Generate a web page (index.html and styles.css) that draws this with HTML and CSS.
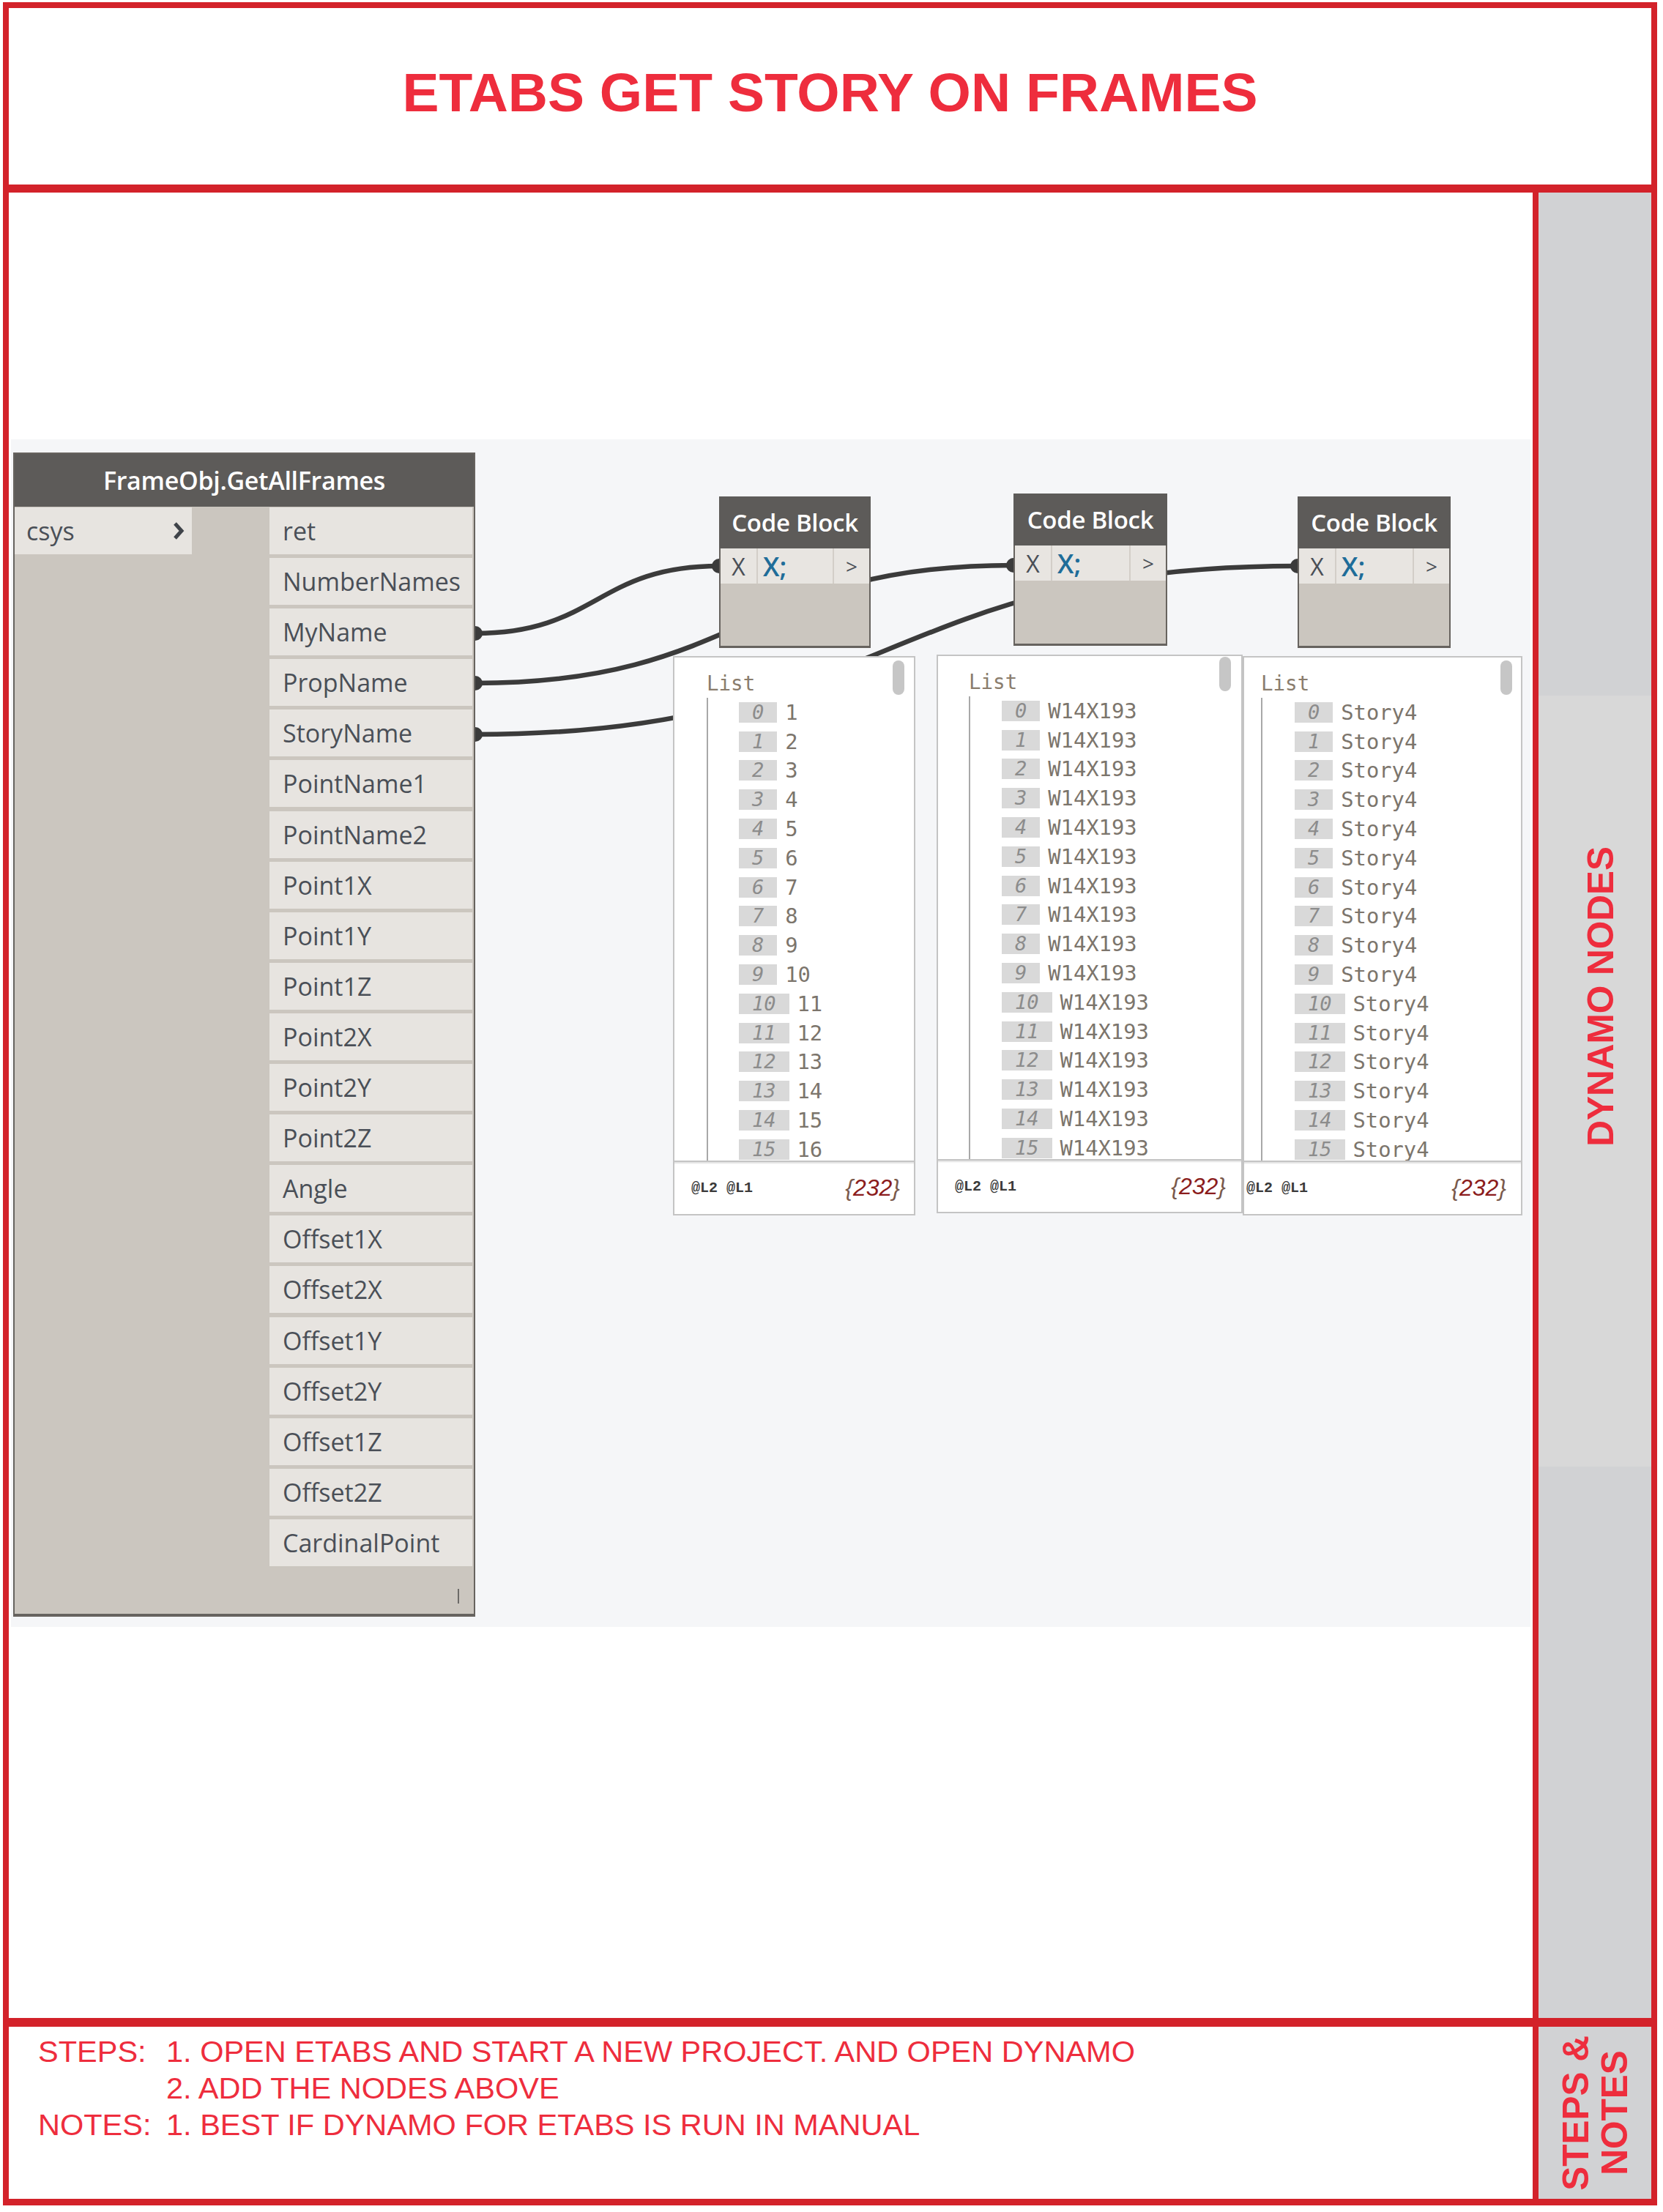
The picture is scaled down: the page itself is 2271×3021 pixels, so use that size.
FILE: index.html
```html
<!DOCTYPE html>
<html lang="en">
<head>
<meta charset="utf-8">
<title>ETABS GET STORY ON FRAMES</title>
<link rel="stylesheet" href="styles.css">
</head>
<body>
<div class="frame">
  <header class="title-band">
    <h1 class="title">ETABS GET STORY ON FRAMES</h1>
  </header>

  <section class="main-row">
    <div class="workspace">
      <div class="canvas">
        <svg class="wires" width="2075" height="1622" viewBox="0 0 2075 1622">
          <g fill="none" stroke="#3b3b3b" stroke-width="6.5" stroke-linecap="round">
            <path d="M634 265 C800 265 800 173 967 173"/>
            <path d="M634 333 C1001 333 1001 172 1369 172"/>
            <path d="M634 403 C1195 403 1195 173 1757 173"/>
          </g>
          <g fill="#3b3b3b">
            <circle cx="634" cy="265" r="10"/>
            <circle cx="634" cy="333" r="10"/>
            <circle cx="634" cy="403" r="10"/>
            <circle cx="967" cy="173" r="10"/>
            <circle cx="1369" cy="172" r="10"/>
            <circle cx="1757" cy="173" r="10"/>
          </g>
        </svg>

        <div class="node frame-node">
          <div class="node-head">FrameObj.GetAllFrames</div>
          <div class="node-body">
            <div class="inputs">
              <div class="port in-port">
                <span>csys</span>
                <svg class="chev" width="16" height="26" viewBox="0 0 16 26"><path d="M3 3 L12 13 L3 23" fill="none" stroke="#3f4349" stroke-width="5" stroke-linejoin="miter"/></svg>
              </div>
            </div>
            <div class="outputs">
              <div class="port out-port">ret</div>
              <div class="port out-port">NumberNames</div>
              <div class="port out-port">MyName</div>
              <div class="port out-port">PropName</div>
              <div class="port out-port">StoryName</div>
              <div class="port out-port">PointName1</div>
              <div class="port out-port">PointName2</div>
              <div class="port out-port">Point1X</div>
              <div class="port out-port">Point1Y</div>
              <div class="port out-port">Point1Z</div>
              <div class="port out-port">Point2X</div>
              <div class="port out-port">Point2Y</div>
              <div class="port out-port">Point2Z</div>
              <div class="port out-port">Angle</div>
              <div class="port out-port">Offset1X</div>
              <div class="port out-port">Offset2X</div>
              <div class="port out-port">Offset1Y</div>
              <div class="port out-port">Offset2Y</div>
              <div class="port out-port">Offset1Z</div>
              <div class="port out-port">Offset2Z</div>
              <div class="port out-port">CardinalPoint</div>
            </div>
          </div>
          <div class="node-foot"><span class="lacing"></span></div>
        </div>

        <div class="node code-block cb1">
          <div class="cb-head">Code Block</div>
          <div class="cb-row"><span class="cb-in">X</span><span class="cb-code">X;</span><span class="cb-out">&gt;</span></div>
        </div>
        <div class="node code-block cb2">
          <div class="cb-head">Code Block</div>
          <div class="cb-row"><span class="cb-in">X</span><span class="cb-code">X;</span><span class="cb-out">&gt;</span></div>
        </div>
        <div class="node code-block cb3">
          <div class="cb-head">Code Block</div>
          <div class="cb-row"><span class="cb-in">X</span><span class="cb-code">X;</span><span class="cb-out">&gt;</span></div>
        </div>

        <div class="watch w1">
          <div class="watch-list">
            <div class="thumb"></div>
            <div class="list-label">List</div>
            <ol class="rows">
              <li><span class="idx">0</span><span class="val">1</span></li>
              <li><span class="idx">1</span><span class="val">2</span></li>
              <li><span class="idx">2</span><span class="val">3</span></li>
              <li><span class="idx">3</span><span class="val">4</span></li>
              <li><span class="idx">4</span><span class="val">5</span></li>
              <li><span class="idx">5</span><span class="val">6</span></li>
              <li><span class="idx">6</span><span class="val">7</span></li>
              <li><span class="idx">7</span><span class="val">8</span></li>
              <li><span class="idx">8</span><span class="val">9</span></li>
              <li><span class="idx">9</span><span class="val">10</span></li>
              <li><span class="idx">10</span><span class="val">11</span></li>
              <li><span class="idx">11</span><span class="val">12</span></li>
              <li><span class="idx">12</span><span class="val">13</span></li>
              <li><span class="idx">13</span><span class="val">14</span></li>
              <li><span class="idx">14</span><span class="val">15</span></li>
              <li><span class="idx">15</span><span class="val">16</span></li>
            </ol>
          </div>
          <div class="watch-foot"><span class="levels">@L2 @L1</span><span class="count"><span class="brace">{</span>232<span class="brace">}</span></span></div>
        </div>

        <div class="watch w2">
          <div class="watch-list">
            <div class="thumb"></div>
            <div class="list-label">List</div>
            <ol class="rows">
              <li><span class="idx">0</span><span class="val">W14X193</span></li>
              <li><span class="idx">1</span><span class="val">W14X193</span></li>
              <li><span class="idx">2</span><span class="val">W14X193</span></li>
              <li><span class="idx">3</span><span class="val">W14X193</span></li>
              <li><span class="idx">4</span><span class="val">W14X193</span></li>
              <li><span class="idx">5</span><span class="val">W14X193</span></li>
              <li><span class="idx">6</span><span class="val">W14X193</span></li>
              <li><span class="idx">7</span><span class="val">W14X193</span></li>
              <li><span class="idx">8</span><span class="val">W14X193</span></li>
              <li><span class="idx">9</span><span class="val">W14X193</span></li>
              <li><span class="idx">10</span><span class="val">W14X193</span></li>
              <li><span class="idx">11</span><span class="val">W14X193</span></li>
              <li><span class="idx">12</span><span class="val">W14X193</span></li>
              <li><span class="idx">13</span><span class="val">W14X193</span></li>
              <li><span class="idx">14</span><span class="val">W14X193</span></li>
              <li><span class="idx">15</span><span class="val">W14X193</span></li>
            </ol>
          </div>
          <div class="watch-foot"><span class="levels">@L2 @L1</span><span class="count"><span class="brace">{</span>232<span class="brace">}</span></span></div>
        </div>

        <div class="watch w3">
          <div class="watch-list">
            <div class="thumb"></div>
            <div class="list-label">List</div>
            <ol class="rows">
              <li><span class="idx">0</span><span class="val">Story4</span></li>
              <li><span class="idx">1</span><span class="val">Story4</span></li>
              <li><span class="idx">2</span><span class="val">Story4</span></li>
              <li><span class="idx">3</span><span class="val">Story4</span></li>
              <li><span class="idx">4</span><span class="val">Story4</span></li>
              <li><span class="idx">5</span><span class="val">Story4</span></li>
              <li><span class="idx">6</span><span class="val">Story4</span></li>
              <li><span class="idx">7</span><span class="val">Story4</span></li>
              <li><span class="idx">8</span><span class="val">Story4</span></li>
              <li><span class="idx">9</span><span class="val">Story4</span></li>
              <li><span class="idx">10</span><span class="val">Story4</span></li>
              <li><span class="idx">11</span><span class="val">Story4</span></li>
              <li><span class="idx">12</span><span class="val">Story4</span></li>
              <li><span class="idx">13</span><span class="val">Story4</span></li>
              <li><span class="idx">14</span><span class="val">Story4</span></li>
              <li><span class="idx">15</span><span class="val">Story4</span></li>
            </ol>
          </div>
          <div class="watch-foot"><span class="levels">@L2 @L1</span><span class="count"><span class="brace">{</span>232<span class="brace">}</span></span></div>
        </div>
      </div>
    </div>
    <aside class="side side-main"><span class="side-label">DYNAMO NODES</span></aside>
  </section>

  <section class="notes-row">
    <div class="notes">
      <div class="note-grid">
        <span class="note-key">STEPS:</span><span>1. OPEN ETABS AND START A NEW PROJECT. AND OPEN DYNAMO</span>
        <span class="note-key"></span><span>2. ADD THE NODES ABOVE</span>
        <span class="note-key">NOTES:</span><span>1. BEST IF DYNAMO FOR ETABS IS RUN IN MANUAL</span>
      </div>
    </div>
    <aside class="side side-notes"><span class="side-label">STEPS &amp;<br>NOTES</span></aside>
  </section>
</div>
</body>
</html>
```

FILE: styles.css
```css
* { box-sizing: border-box; }

html, body {
  margin: 0;
  padding: 0;
  background: #ffffff;
}

body {
  width: 2271px;
  height: 3021px;
  font-family: "Liberation Sans", Arial, sans-serif;
}

.frame {
  margin: 3px 0 0 4px;
  width: 2259px;
  height: 3009px;
  border: 8px solid #d3222a;
  border-bottom-width: 9px;
  display: flex;
  flex-direction: column;
}

/* ---------- title ---------- */
.title-band {
  height: 252px;
  flex: none;
  border-bottom: 11px solid #d3222a;
  display: flex;
  align-items: center;
  justify-content: center;
  padding-bottom: 10px;
}

.title {
  margin: 0;
  font-family: "Liberation Sans", Arial, sans-serif;
  font-weight: 700;
  font-size: 75px;
  line-height: 1;
  color: #ee2d3d;
}

/* ---------- main row ---------- */
.main-row {
  height: 2505px;
  flex: none;
  display: flex;
  border-bottom: 12px solid #d3222a;
}

.workspace {
  width: 2089px;
  flex: none;
  border-right: 8px solid #d3222a;
  padding: 337px 3px 0 3px;
}

.canvas {
  position: relative;
  height: 1622px;
  background: #f5f6f8;
}

.wires {
  position: absolute;
  left: 0;
  top: 0;
  z-index: 0;
}

.side {
  flex: 1;
  display: flex;
  justify-content: center;
  color: #ee2d3d;
}

.side-label {
  writing-mode: vertical-rl;
  transform: rotate(180deg);
  font-family: "Liberation Sans", Arial, sans-serif;
  font-weight: 700;
  font-size: 49.5px;
  line-height: 53px;
  text-align: center;
  white-space: nowrap;
}

.side-main {
  background: linear-gradient(to bottom, #d1d2d4 0, #d1d2d4 687px, #d8d8d8 687px, #d8d8d8 1740px, #d1d2d4 1740px);
  align-items: flex-start;
  padding-top: 893px;
  padding-left: 14px;
}

.side-notes {
  background: #d1d2d4;
  align-items: center;
}

/* ---------- notes ---------- */
.notes-row {
  flex: 1;
  display: flex;
}

.notes {
  width: 2089px;
  flex: none;
  border-right: 8px solid #d3222a;
  padding: 9px 0 0 40px;
}

.note-grid {
  display: grid;
  grid-template-columns: 175px auto;
  font-family: "Liberation Sans", Arial, sans-serif;
  font-size: 41.5px;
  line-height: 50px;
  color: #ee2d3d;
  white-space: nowrap;
}

/* ---------- dynamo nodes ---------- */
.node {
  position: absolute;
  z-index: 1;
  font-family: "Open Sans", "Liberation Sans", sans-serif;
}

.frame-node {
  left: 3px;
  top: 18px;
  width: 631px;
  height: 1590px;
  background: #cbc6bf;
  border: 2px solid #67635f;
  border-bottom-width: 4px;
  display: flex;
  flex-direction: column;
}

.node-head {
  height: 72px;
  flex: none;
  background: #5d5b59;
  color: #ffffff;
  font-size: 34px;
  font-weight: 600;
  letter-spacing: -0.3px;
  display: flex;
  align-items: center;
  justify-content: center;
}

.node-body {
  display: flex;
  justify-content: space-between;
  padding-top: 1px;
}

.inputs {
  width: 242px;
}

.port {
  height: 64px;
  background: #e7e4e0;
  display: flex;
  align-items: center;
  font-size: 34px;
  color: #4a4f57;
}

.in-port {
  justify-content: space-between;
  padding: 0 10px 0 16px;
}

.chev {
  display: block;
}

.outputs {
  width: 277px;
  margin-right: 2px;
  display: flex;
  flex-direction: column;
  gap: 5.1px;
}

.out-port {
  padding-left: 18px;
  white-space: nowrap;
}

.node-foot {
  flex: 1;
  display: flex;
  justify-content: flex-end;
  align-items: flex-end;
  padding: 0 20px 14px 0;
}

.lacing {
  width: 2px;
  height: 20px;
  background: #6c6a68;
}

/* code blocks */
.code-block {
  width: 207px;
  height: 207px;
  background: #cbc6bf;
  border: 2px solid #67635f;
  border-top: 0;
  border-bottom-width: 3px;
}

.cb1 { left: 967px; top: 78px; }
.cb2 { left: 1369px; top: 74px; width: 210px; height: 208px; }
.cb3 { left: 1757px; top: 78px; width: 209px; }

.cb-head {
  height: 71px;
  margin: 0 -2px;
  background: #5d5b59;
  color: #ffffff;
  font-size: 33px;
  font-weight: 600;
  letter-spacing: -0.3px;
  display: flex;
  align-items: center;
  justify-content: center;
  white-space: nowrap;
}

.cb-row {
  height: 48px;
  display: flex;
  gap: 2px;
  background: #d3cec8;
  font-size: 32px;
}

.cb-row span {
  background: #e8e5e1;
  display: flex;
  align-items: center;
  justify-content: center;
}

.cb-in {
  width: 49px;
  color: #4a4f57;
}

.cb-code {
  flex: 1;
  justify-content: flex-start !important;
  padding-left: 7px;
  color: #1f6d99;
  font-size: 36px;
  font-weight: 600;
}

.cb-out {
  width: 48px;
  color: #4a4f57;
  font-size: 28px;
}

/* watch boxes */
.watch {
  position: absolute;
  z-index: 2;
  display: flex;
  flex-direction: column;
}

.w1 { left: 904px; top: 296px; width: 331px; }
.w2 { left: 1264px; top: 294px; width: 418px; }
.w3 { left: 1682px; top: 296px; width: 382px; }

.watch-list {
  position: relative;
  height: 691px;
  background: #ffffff;
  border: 2px solid #c4c4c4;
  overflow: hidden;
  padding-top: 15px;
}

.w1 .watch-list { padding-left: 44px; }
.w2 .watch-list { padding-left: 42px; }
.w3 .watch-list { padding-left: 23px; }

.thumb {
  position: absolute;
  top: 4px;
  right: 13px;
  width: 16px;
  height: 47px;
  border-radius: 8px;
  background: #c6c6c6;
}

.w2 .thumb { right: 14px; top: 1px; }
.w3 .thumb { right: 12px; }

.list-label {
  font-family: "DejaVu Sans Mono", "Liberation Mono", monospace;
  font-size: 27.5px;
  line-height: 40px;
  color: #8a7d6d;
}

.rows {
  list-style: none;
  margin: 0;
  padding: 0 0 0 42px;
  border-left: 2px solid #a8a8a8;
}

.w2 .rows { padding-left: 43px; }
.w3 .rows { padding-left: 44px; }

.rows li {
  height: 39.8px;
  display: flex;
  align-items: center;
  gap: 11px;
  font-family: "DejaVu Sans Mono", "Liberation Mono", monospace;
}

.idx {
  height: 28px;
  padding: 0 18px;
  background: #d9d9d9;
  color: #8c8c8c;
  font-style: italic;
  font-size: 27px;
  line-height: 28px;
}

.val {
  font-size: 28.8px;
  line-height: 28px;
  color: #7c756c;
}

.watch-foot {
  height: 73px;
  background: #ffffff;
  border: 2px solid #c4c4c4;
  border-top: 0;
  box-shadow: inset 0 3px 2px -1px #e2e2e2;
  display: flex;
  align-items: center;
  justify-content: space-between;
  padding: 0 19px 0 23px;
}

.w2 .watch-foot { height: 72px; padding-right: 21px; }
.w3 .watch-foot { padding-left: 3px; padding-right: 20px; }

.levels {
  font-family: "Liberation Mono", monospace;
  font-weight: 700;
  font-size: 20px;
  color: #3a3a3a;
}

.count {
  font-family: "Liberation Sans", Arial, sans-serif;
  font-style: italic;
  font-size: 32px;
  color: #8b1c1c;
}

.brace {
  color: #7a5a4c;
}
```
